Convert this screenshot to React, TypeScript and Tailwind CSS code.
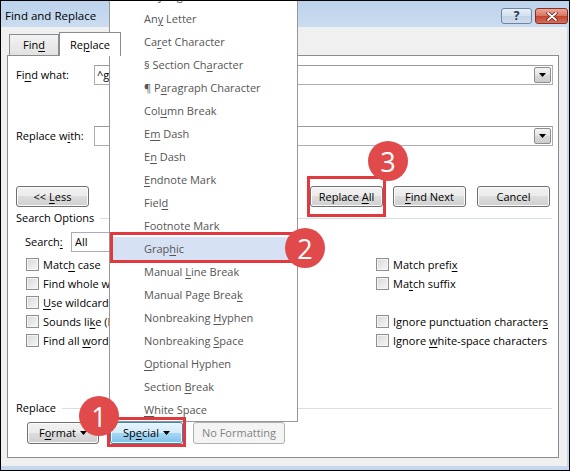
import React from 'react'

// "&" marks the access key, which gets underlined
function Acc({ text }: { text: string }) {
    const i = text.indexOf('&')
    if (i < 0) return <span className="whitespace-pre">{text}</span>
    return (
        <span className="whitespace-pre">
            {text.slice(0, i)}
            <span className="underline underline-offset-[2px] decoration-1">{text[i + 1]}</span>
            {text.slice(i + 2)}
        </span>
    )
}

function Caret() {
    return (
        <svg width="7" height="4" viewBox="0 0 7 4" className="ml-[4px]">
            <path d="M0 0h7L3.5 4z" fill="currentColor" />
        </svg>
    )
}

function Btn({ label, w, caret = false }: { label: string; w: string; caret?: boolean }) {
    return (
        <div className={`${w} h-full flex items-center justify-center rounded-[3px] border border-[#707070] bg-[linear-gradient(#f2f2f2,#ebebeb_50%,#dddddd_50%,#cfcfcf)] shadow-[inset_0_0_0_1px_#fbfbfb]`}>
            <Acc text={label} />
            {caret && <Caret />}
        </div>
    )
}

function Combo({ value, w }: { value: string; w: string }) {
    return (
        <div className={`${w} h-[20px] border border-[#abadb3] border-t-[#9a9ca3] bg-white flex items-center pl-[2px] pr-px`}>
            <span className="flex-1">{value}</span>
            <div className="w-[17px] h-[16px] border border-[#8d8d8d] rounded-[2px] bg-[linear-gradient(#f4f4f4,#e3e3e3_50%,#d9d9d9_50%,#cdcdcd)] flex items-center justify-center">
                <svg width="7" height="4" viewBox="0 0 7 4">
                    <path d="M0 0h7L3.5 4z" fill="#000" />
                </svg>
            </div>
        </div>
    )
}

function Check({ label }: { label: string }) {
    return (
        <div className="h-[19px] flex items-center gap-[4px] whitespace-nowrap">
            <div className="shrink-0 w-[13px] h-[13px] border border-[#8e8f8f] bg-[linear-gradient(135deg,#d8d8d8,#f7f7f7)] shadow-[inset_0_0_0_1px_#f4f4f4]" />
            <Acc text={label} />
        </div>
    )
}

const leftChecks = ['Matc&h case', 'Find whole words onl&y', '&Use wildcards', 'Sounds li&ke (English)', 'Find all &word forms (English)']
const rightChecks = ['Match prefi&x', 'Ma&tch suffix', '', 'Ignore punctuation character&s', 'Ignore &white-space characters']

const menuItems = [
    'Any Digit',
    'An&y Letter',
    'Ca&ret Character',
    '§ Section Ch&aracter',
    '¶ P&aragraph Character',
    'Col&umn Break',
    'E&m Dash',
    'E&n Dash',
    '&Endnote Mark',
    'Fiel&d',
    '&Footnote Mark',
    'Grap&hic',
    'Manual &Line Break',
    'Manual Page Brea&k',
    'Nonbreaking &Hyphen',
    'Nonbreaking &Space',
    '&Optional Hyphen',
    'Section &Break',
    '&White Space',
]

function Badge({ n, pos }: { n: string; pos: string }) {
    return (
        <div className={`absolute ${pos} w-[40px] h-[40px] rounded-full bg-[#e14a4a] text-white text-[27px] leading-none flex items-center justify-center`}>
            {n}
        </div>
    )
}

export default function App() {
    return (
        <div className="relative w-[570px] h-[471px] border border-black bg-[#f0f0f0] flex flex-col overflow-hidden text-black text-[11px] leading-[16px] font-['Open_Sans',sans-serif]">
            {/* title bar */}
            <div className="h-[26px] shrink-0 flex items-start justify-between pl-[4px] pr-px pt-[7px] bg-linear-to-b from-[#bcd3ec] to-[#cadcf0]">
                <span className="text-[11.5px]">Find and Replace</span>
                <div className="flex gap-[3px]">
                    <div className="w-[31px] h-[16px] rounded-[3px] border border-[#6f84a3] bg-[linear-gradient(#e8eff7,#d4e0ee_50%,#c3d3e6_50%,#cfdcec)] flex items-center justify-center text-[#22364f] text-[12px] font-bold leading-none">
                        ?
                    </div>
                    <div className="w-[33px] h-[16px] rounded-[3px] border border-[#8c2c23] bg-[linear-gradient(#eaa89a,#d8735f_50%,#c4412b_50%,#d0715c)] flex items-center justify-center">
                        <svg width="12" height="9" viewBox="0 0 12 9">
                            <path d="M2 1l8 7M10 1L2 8" stroke="#5b1a12" strokeWidth="3.2" strokeLinecap="round" />
                            <path d="M2 1l8 7M10 1L2 8" stroke="#ffffff" strokeWidth="1.8" strokeLinecap="round" />
                        </svg>
                    </div>
                </div>
            </div>

            {/* body */}
            <div className="flex flex-1 min-h-0">
                <div className="flex-1 flex flex-col pl-[6px] pr-[8px] pt-[5px] pb-[8px]">
                    {/* tabs */}
                    <div className="h-[23px] shrink-0 flex items-end pl-[2px]">
                        <div className="w-[50px] h-[21px] border border-b-0 border-[#898c95] bg-linear-to-b from-[#f3f3f3] to-[#e2e2e2] flex items-center justify-center">
                            <Acc text="Fin&d" />
                        </div>
                        <div className="relative z-10 w-[62px] h-[24px] -mb-px border border-b-0 border-[#898c95] bg-white flex items-center pl-[10px]">
                            <Acc text="Re&place" />
                        </div>
                    </div>

                    {/* tab panel */}
                    <div className="flex-1 flex flex-col border border-[#898c95] bg-white pl-[8px] pr-[5px] pb-[13px]">
                        <div className="mt-[9px] h-[20px] flex items-center">
                            <span className="w-[78px]"><Acc text="Fi&nd what:" /></span>
                            <Combo value="^g" w="w-[459px]" />
                        </div>
                        <div className="mt-[41px] h-[20px] flex items-center">
                            <span className="w-[78px]"><Acc text="Replace w&ith:" /></span>
                            <Combo value="" w="w-[459px]" />
                        </div>

                        <div className="mt-[40px] h-[21px] flex">
                            <Btn label="<< &Less" w="w-[73px]" />
                            <div className="ml-auto mr-[3px] flex gap-[10px]">
                                <Btn label="Replace &All" w="w-[73px]" />
                                <div className="flex gap-[11px] h-full">
                                    <Btn label="&Find Next" w="w-[73px]" />
                                    <Btn label="Cancel" w="w-[73px]" />
                                </div>
                            </div>
                        </div>

                        <div className="mt-[3px] h-[16px] flex items-center">
                            <span>Search Options</span>
                            <div className="flex-1 h-px ml-[6px] mr-px bg-[#d5dfe5]" />
                        </div>

                        <div className="mt-[6px] h-[20px] flex items-center pl-[9px]">
                            <span className="w-[46px]"><Acc text="Search&:" /></span>
                            <div className="w-[110px] h-[20px] border border-[#abadb3] flex items-center pl-[3px]">All</div>
                        </div>

                        <div className="mt-[3px] pl-[10px] grid grid-cols-[350px_1fr]">
                            {leftChecks.map((l, i) => (
                                <React.Fragment key={l}>
                                    <Check label={l} />
                                    {rightChecks[i] ? <Check label={rightChecks[i]} /> : <div className="h-[19px]" />}
                                </React.Fragment>
                            ))}
                        </div>

                        <div className="flex-1" />

                        <div className="h-[16px] flex items-center">
                            <span>Replace</span>
                            <div className="flex-1 h-px ml-[6px] mr-px bg-[#d5dfe5]" />
                        </div>
                        <div className="mt-[6px] h-[22px] flex pl-[11px]">
                            <Btn label="F&ormat" w="w-[72px]" caret />
                            <div className="ml-[11px] w-[73px] h-full flex items-center justify-center rounded-[3px] border border-[#3c7fb1] bg-[linear-gradient(#e6f4fc,#d3ecfa_50%,#a7d8f4_50%,#7fc0e8)] shadow-[inset_0_0_0_1px_#eef8fe]">
                                <Acc text="Sp&ecial" />
                                <Caret />
                            </div>
                            <div className="ml-[10px] w-[92px] h-full flex items-center justify-center rounded-[3px] border border-[#adb2b5] bg-[#f4f4f4] text-[#838383]">
                                No Formatting
                            </div>
                        </div>
                    </div>
                </div>
                <div className="w-[2px] bg-[#c4d7ed]" />
            </div>
            <div className="h-[4px] shrink-0 bg-[#c4d7ed]" />

            {/* Special dropdown menu */}
            <div className="absolute left-[108px] top-0 w-[189px] h-[421px] border border-t-0 border-[#979797] bg-white flex flex-col justify-end overflow-hidden text-[#555]">
                {menuItems.map(m =>
                    m === 'Grap&hic' ? (
                        <div key={m} className="shrink-0 h-[23px] mx-[2px] bg-[#d6e2f3] flex items-center pl-[32px]">
                            <Acc text={m} />
                        </div>
                    ) : (
                        <div key={m} className="shrink-0 h-[23px] flex items-center pl-[34px]">
                            <Acc text={m} />
                        </div>
                    )
                )}
            </div>

            {/* callout boxes */}
            <div className="absolute left-[109px] top-[231px] w-[189px] h-[31px] border-[3px] border-[#e0393e]" />
            <div className="absolute left-[306px] top-[175px] w-[79px] h-[41px] border-[3px] border-[#e0393e]" />
            <div className="absolute left-[106px] top-[416px] w-[79px] h-[30px] border-[3px] border-[#e0393e]" />

            <Badge n="1" pos="left-[78px] top-[395px]" />
            <Badge n="2" pos="left-[284px] top-[227px]" />
            <Badge n="3" pos="left-[367px] top-[140px]" />
        </div>
    )
}
